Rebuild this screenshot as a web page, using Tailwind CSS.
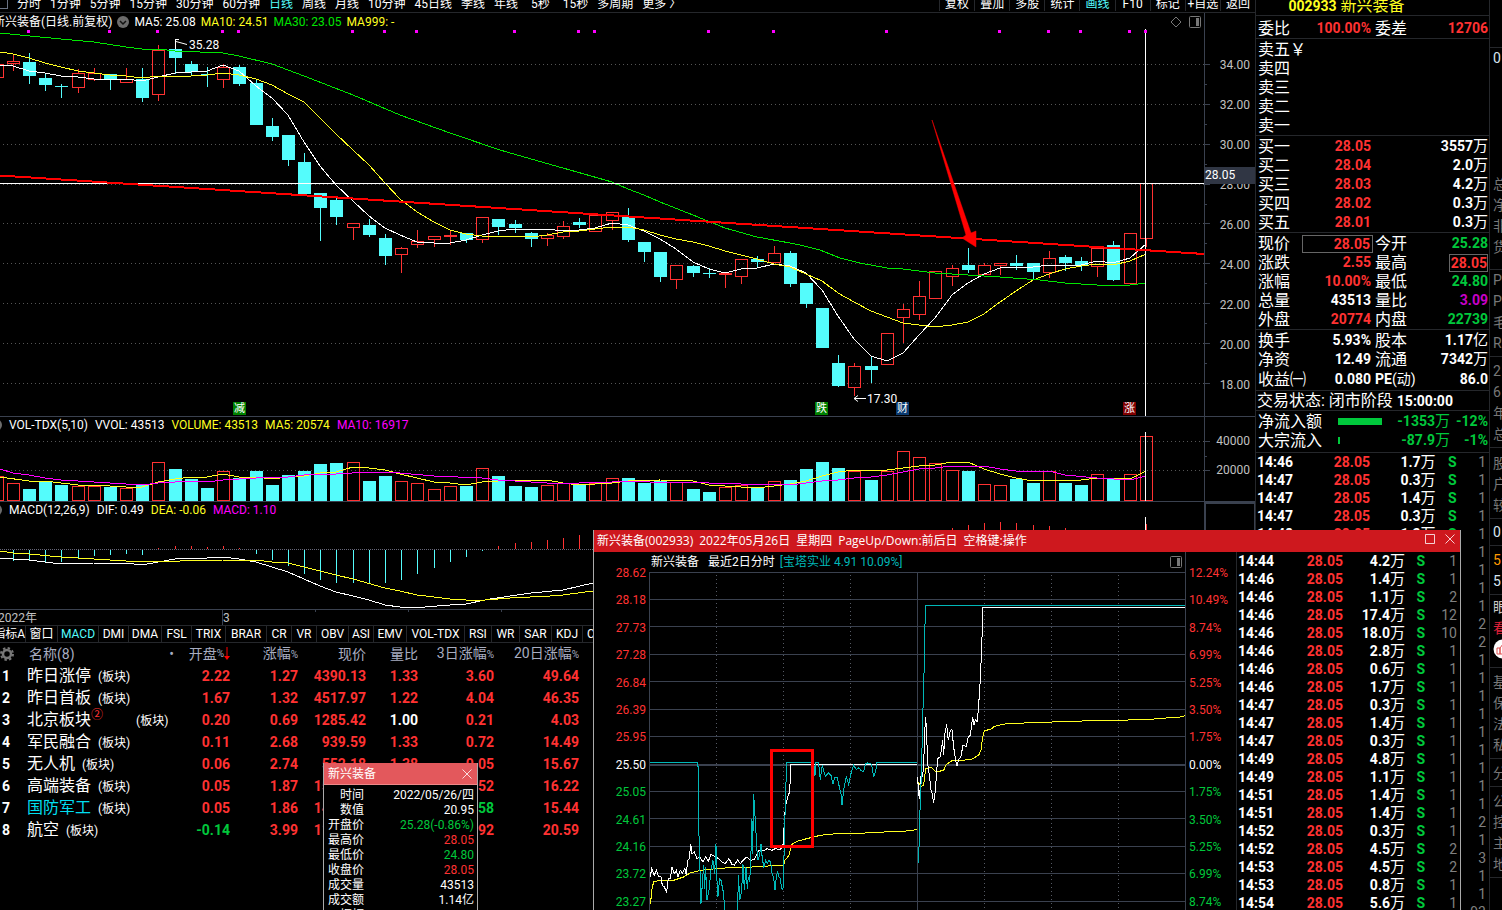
<!DOCTYPE html>
<html lang="zh-CN">
<head>
<meta charset="utf-8">
<title>新兴装备 002933</title>
<script src="https://cdn.jsdelivr.net/npm/@tailwindcss/browser@4"></script>
</head>
<body class="bg-black text-white text-xs font-['Roboto','Noto_Sans_CJK_SC',sans-serif] whitespace-nowrap">
<div class="relative flex h-screen overflow-hidden">

<!-- Charts and sector list -->
<main class="flex-1 min-w-0 overflow-hidden flex flex-col">
  <nav class="h-[13px] shrink-0 border-b border-[#25272b] overflow-hidden flex justify-between items-start">
    <div class="flex gap-[9px] -mt-[3px] leading-[14px]">
      <span class="w-2 h-3 border-r border-b border-gray-500"></span>
      <button>分时</button><button>1分钟</button><button>5分钟</button><button>15分钟</button><button>30分钟</button><button>60分钟</button><button class="text-[#54fcfc]">日线</button><button>周线</button><button>月线</button><button>10分钟</button><button>45日线</button><button>季线</button><button>年线</button><button class="pl-1">5秒</button><button class="pl-1">15秒</button><button>多周期</button><button>更多 〉</button>
    </div>
    <div class="grid grid-cols-9 w-[316px] -mt-[3px] leading-[14px] h-[14px]">
      <button class="border-l border-[#25272b]">复权</button><button class="border-l border-[#25272b]">叠加</button><button class="border-l border-[#25272b]">多股</button><button class="border-l border-[#25272b]">统计</button><button class="border-l border-[#25272b] text-[#54fcfc]">画线</button><button class="border-l border-[#25272b]">F10</button><button class="border-l border-[#25272b]">标记</button><button class="border-l border-[#25272b]">+自选</button><button class="border-l border-[#25272b]">返回</button>
    </div>
  </nav>

  <section class="relative h-[404px] shrink-0 border-b border-[#3a414f] flex">
    <div class="relative flex-1 min-w-0">
      <svg id="kline" class="absolute inset-0 w-full h-full" viewBox="0 13 1204 403" preserveAspectRatio="none"></svg>
      <div class="relative flex items-center justify-between h-[18px] leading-[18px]">
        <div class="flex items-center gap-[5px] -ml-[7px]">
          <span>新兴装备(日线.前复权)</span>
          <svg class="w-3 h-3" viewBox="0 0 12 12"><circle cx="6" cy="6" r="6" fill="#6c6c6c"/><path d="M3 5l3 3 3-3" fill="none" stroke="#111" stroke-width="1.5"/></svg>
          <span>MA5: 25.08</span><span class="text-[#ffff20]">MA10: 24.51</span><span class="text-[#00e600]">MA30: 23.05</span><span class="text-[#ffff20]">MA999: -</span>
        </div>
        <div class="flex items-center gap-[7px] pr-[3px]">
          <svg class="w-3 h-3" viewBox="0 0 12 12"><path d="M6 1l5 5-5 5-5-5z" fill="none" stroke="#777"/></svg>
          <svg class="w-3 h-3" viewBox="0 0 12 12"><rect x=".5" y=".5" width="11" height="11" rx="1" fill="none" stroke="#777"/><path d="M7 2h3v8H7z" fill="#777"/></svg>
        </div>
      </div>
      <span class="absolute left-[189px] top-[25px] leading-[14px]">35.28</span>
      <span class="absolute left-[867px] top-[379px] leading-[14px]">17.30</span>
      <span class="absolute left-[233px] top-[389px] w-[13px] h-[13px] leading-[13px] text-[11px] text-center bg-[#008000]">减</span>
      <span class="absolute left-[815px] top-[389px] w-[13px] h-[13px] leading-[13px] text-[11px] text-center bg-[#008000]">跌</span>
      <span class="absolute left-[896px] top-[389px] w-[13px] h-[13px] leading-[13px] text-[11px] text-center bg-[#0a3a70]">财</span>
      <span class="absolute left-[1123px] top-[389px] w-[13px] h-[13px] leading-[13px] text-[11px] text-center bg-[#800000]">涨</span>
    </div>
    <div class="relative w-[51px] border-l border-[#3a414f] text-[#c0c0c0] pt-[44px] pr-[5px] flex flex-col gap-6 items-end leading-4">
      <svg id="ticks" class="absolute left-0 top-0 w-2 h-[403px]" viewBox="0 13 8 403"></svg>
      <span>34.00</span><span>32.00</span><span>30.00</span><span>28.00</span><span>26.00</span><span>24.00</span><span>22.00</span><span>20.00</span><span>18.00</span>
      <span class="absolute left-0 top-[154px] w-[50px] h-[17px] bg-[#303644] text-white leading-[17px]">28.05</span>
    </div>
  </section>

  <section class="relative h-[85px] shrink-0 border-b border-[#3a414f] flex">
    <div class="relative flex-1 min-w-0">
      <svg id="volume" class="absolute inset-0 w-full h-full" viewBox="0 417 1204 84" preserveAspectRatio="none"></svg>
      <div class="relative flex items-center gap-[7px] leading-4">
        <svg class="w-3 h-3 -ml-[10px]" viewBox="0 0 12 12"><circle cx="6" cy="6" r="6" fill="#6c6c6c"/><path d="M3 5l3 3 3-3" fill="none" stroke="#111" stroke-width="1.5"/></svg>
        <span>VOL-TDX(5,10)</span><span>VVOL: 43513</span><span class="text-[#ffff20]">VOLUME: 43513</span><span class="text-[#ffff20]">MA5: 20574</span><span class="text-[#ff00ff]">MA10: 16917</span>
      </div>
    </div>
    <div class="relative w-[51px] border-l border-[#3a414f] text-[#c0c0c0] pt-4 pr-[5px] flex flex-col gap-[13px] items-end leading-4">
      <svg class="absolute left-0 top-0 w-2 h-[84px]" viewBox="0 417 8 84" stroke="#3a414f"><path d="M0 441.5h5M0 456.5h2M0 470.5h5"/></svg>
      <span>40000</span><span>20000</span>
    </div>
  </section>

  <section class="relative h-[108px] shrink-0 border-b border-[#3a414f] flex">
    <div class="relative flex-1 min-w-0">
      <svg id="macd" class="absolute inset-0 w-full h-full" viewBox="0 502 1204 107" preserveAspectRatio="none"></svg>
      <div class="relative flex items-center gap-[7px] leading-4">
        <svg class="w-3 h-3 -ml-[10px]" viewBox="0 0 12 12"><circle cx="6" cy="6" r="6" fill="#6c6c6c"/><path d="M3 5l3 3 3-3" fill="none" stroke="#111" stroke-width="1.5"/></svg>
        <span>MACD(12,26,9)</span><span>DIF: 0.49</span><span class="text-[#ffff20]">DEA: -0.06</span><span class="text-[#ff00ff]">MACD: 1.10</span>
      </div>
    </div>
    <div class="w-[51px] border-2 border-r border-[#3a414f]"></div>
  </section>

  <div class="relative h-[15px] shrink-0 text-[#c0c0c0] leading-[16px]">
    <svg class="absolute left-0 top-0 w-[593px] h-[15px]" viewBox="0 610 593 15" stroke="#3a414f"><path d="M222.5 610v15M315.5 610v2M408.5 610v2M501.5 610v2"/></svg>
    <div class="flex"><span class="w-[223px] -ml-0.5">2022年</span><span class="pl-0.5">3</span></div>
  </div>

  <div class="h-[18px] shrink-0 border-y border-[#25272b] w-[593px] overflow-hidden">
    <div id="tabs" class="grid grid-cols-[26px_32px_41px_30px_33px_30px_34px_41px_25px_25px_32px_25px_33px_58px_27px_28px_32px_31px_40px] leading-4"></div>
  </div>

  <table class="w-[579px] table-fixed text-right text-sm">
    <colgroup><col class="w-[26px]"><col class="w-[150px]"><col class="w-[54px]"><col class="w-[68px]"><col class="w-[68px]"><col class="w-[52px]"><col class="w-[76px]"><col class="w-[85px]"></colgroup>
    <thead><tr class="h-[22px] leading-5 text-[#a8adc0]">
      <th class="text-left"><svg class="w-[14px] h-[14px]" viewBox="0 0 14 14"><circle cx="7" cy="7" r="4" fill="none" stroke="#777" stroke-width="2.5"/><circle cx="7" cy="7" r="6" fill="none" stroke="#777" stroke-width="2" stroke-dasharray="2.4 2.3"/></svg></th>
      <th class="font-normal"><span class="flex justify-between pl-[3px] pr-[2px]"><span>名称(8)</span><span>•</span></span></th>
      <th class="font-normal"><span class="flex justify-end items-center">开盘<span class="text-[10px]">%</span><svg class="w-[6px] h-4" viewBox="0 0 6 16"><path d="M3 1v11" stroke="red"/><path d="M0 10h6l-3 4z" fill="red"/></svg></span></th>
      <th class="font-normal">涨幅<span class="text-[10px]">%</span></th><th class="font-normal">现价</th><th class="font-normal">量比</th><th class="font-normal">3日涨幅<span class="text-[10px]">%</span></th><th class="font-normal">20日涨幅<span class="text-[10px]">%</span></th>
    </tr></thead>
    <tbody id="sectors"></tbody>
  </table>
</main>

<!-- Quote panel -->
<aside class="w-[235px] shrink-0 border-x border-[#25272b] text-base overflow-hidden">
  <h1 class="h-[19px] border-b border-[#25272b] text-[#ffff20] leading-4 flex items-start justify-center -mt-[3px] mb-[3px] pr-[52px] gap-1 h-[19px]"><b class="text-sm leading-[18px]">002933</b><span class="leading-[18px]">新兴装备</span></h1>
  <div id="quote"></div>
  <table class="w-full table-fixed text-right text-sm font-bold">
    <colgroup><col class="w-[50px]"><col class="w-[63px]"><col class="w-[65px]"><col class="w-[23px]"><col class="w-[30px]"></colgroup>
    <tbody id="ticksA"></tbody>
  </table>
</aside>

<!-- Sliver of the company column -->
<aside id="company" class="w-[12px] shrink-0 overflow-hidden text-sm text-[#777]"></aside>

<!-- Intraday window -->
<section class="absolute left-[593px] top-[530px] bottom-0 w-[868px] bg-black border-x border-[#aaa] overflow-hidden">
  <header class="-mx-px h-[22px] bg-[#ce181e] flex items-center justify-between pl-1 pr-[6px] text-[12px] font-['Open_Sans','Noto_Sans_CJK_SC',sans-serif]">
    <span class="flex gap-[6px]"><span>新兴装备(002933)</span><span>2022年05月26日</span><span>星期四</span><span>PageUp/Down:前后日</span><span>空格键:操作</span></span>
    <span class="flex gap-[10px] pb-1">
      <button aria-label="最大化"><svg class="w-[10px] h-[10px] block" viewBox="0 0 10 10"><path d="M.5.5h9v9h-9z" fill="none" stroke="#fff" opacity=".8"/></svg></button>
      <button aria-label="关闭"><svg class="w-[10px] h-[10px] block" viewBox="0 0 10 10"><path d="M.5.5l9 9M9.500.5l-9 9" fill="none" stroke="#fff" opacity=".8"/></svg></button>
    </span>
  </header>
  <div class="flex">
    <div class="w-[55px] shrink-0 pt-[13px]"><div class="h-[345px] flex flex-col justify-between items-end leading-4 pr-[3px] text-[#ff3232]">
      <span>28.62</span><span>28.18</span><span>27.73</span><span>27.28</span><span>26.84</span><span>26.39</span><span>25.95</span><span class="text-white">25.50</span><span class="text-[#00c83c]">25.05</span><span class="text-[#00c83c]">24.61</span><span class="text-[#00c83c]">24.16</span><span class="text-[#00c83c]">23.72</span><span class="text-[#00c83c]">23.27</span>
    </div></div>
    <div class="relative w-[537px] h-[358px] shrink-0">
      <svg id="intraday" class="absolute inset-0 w-full h-full" viewBox="649 552 537 358"></svg>
      <div class="relative flex items-center justify-between h-5 px-0.5 pr-[4px]">
        <div class="flex gap-[5px]"><span class="mr-1">新兴装备</span><span>最近2日分时</span><span class="text-[#00b8b8]">[宝塔实业 4.91 10.09%]</span></div>
        <svg class="w-3 h-3" viewBox="0 0 12 12"><rect x=".5" y=".5" width="11" height="11" rx="1" fill="none" stroke="#777"/><path d="M7 2h3v8H7z" fill="#777"/></svg>
      </div>
    </div>
    <div class="w-[51px] shrink-0 pt-[13px] border-r border-[#25272b]"><div class="h-[345px] flex flex-col justify-between leading-4 pl-[3px] text-[#ff3232]">
      <span>12.24%</span><span>10.49%</span><span>8.74%</span><span>6.99%</span><span>5.25%</span><span>3.50%</span><span>1.75%</span><span class="text-white">0.00%</span><span class="text-[#00c83c]">1.75%</span><span class="text-[#00c83c]">3.50%</span><span class="text-[#00c83c]">5.25%</span><span class="text-[#00c83c]">6.99%</span><span class="text-[#00c83c]">8.74%</span>
    </div></div>
    <div class="flex-1 min-w-0">
      <table class="w-full table-fixed text-right text-sm font-bold">
        <colgroup><col class="w-[48px]"><col class="w-[58px]"><col class="w-[62px]"><col class="w-[22px]"><col></colgroup>
        <tbody id="ticksB"></tbody>
      </table>
    </div>
  </div>
</section>

<!-- Cursor data window -->
<section class="absolute left-[323px] top-[763px] bottom-0 w-[155px] bg-black border-x border-[#aaa] overflow-hidden">
  <header class="-mx-px h-[22px] bg-[#e3585c] flex items-center justify-between pl-[5px] pr-[6px] border-b border-[#e88]">
    <span>新兴装备</span>
    <button aria-label="关闭"><svg class="w-[10px] h-[10px] block" viewBox="0 0 10 10"><path d="M.5.5l9 9M9.500.5l-9 9" fill="none" stroke="#fff" opacity=".8"/></svg></button>
  </header>
  <dl id="cursor" class="grid grid-cols-[36px_1fr] pl-1 pr-[3px] pt-[3px] text-right leading-[15px]"></dl>
</section>
</div>

<script>
const RED = '#ff3232', CY = '#54fcfc', YE = '#ffff20', MG = '#ff00ff', GR = '#3a414f';
// centre x, wick top, wick bottom, body top, body bottom, rising?, volume bar top
const K = [
[-2.5,64,78,64,78,1,476],[13.5,55,71,61,64,1,483],[29.5,53,84,62,76,0,489],[45.5,74,91,78,85,0,481],[61.5,84,98,86,87,0,485],
[78.5,69,93,73,88,1,486],[94.5,68,81,73,80,1,486],[110.5,74,90,74,80,0,487],[126.5,68,83,79,83,1,488],[142.5,68,102,79,98,0,485],
[158.5,45,101,50,95,1,462],[175.5,40,74,49,58,0,469],[191.5,61,75,64,72,0,479],[207.5,67,87,74,75,0,488],[223.5,64,88,67,80,1,471],
[239.5,65,86,67,84,0,478],[256.5,80,125,83,125,0,471],[272.5,118,141,126,137,0,485],[288.5,135,166,135,160,0,475],[304.5,153,194,162,194,0,471],
[320.5,193,241,193,208,0,464],[336.5,196,225,200,217,0,463],[353.5,223,240,223,228,1,462],[369.5,219,237,225,235,0,481],[385.5,234,265,238,256,0,476],
[401.5,247,273,248,255,1,481],[417.5,230,248,241,245,1,483],[434.5,236,247,236,240,1,489],[450.5,230,245,235,237,1,486],[466.5,233,243,233,240,0,486],
[482.5,217,243,217,240,1,468],[498.5,219,235,219,227,0,476],[515.5,220,233,224,228,0,486],[531.5,232,247,233,239,0,487],[547.5,233,246,235,239,1,485],
[563.5,221,239,226,237,1,483],[579.5,218,228,222,225,0,484],[595.5,215,232,215,232,1,483],[612.5,212,230,212,221,1,478],[628.5,208,242,217,240,0,478],
[644.5,242,262,242,252,0,483],[660.5,252,282,252,277,0,481],[676.5,265,289,265,280,1,482],[693.5,265,277,266,273,0,489],[709.5,268,278,273,274,0,492],
[725.5,273,288,273,275,1,487],[741.5,259,284,259,277,1,485],[757.5,256,267,259,262,0,488],[774.5,246,263,253,263,1,481],[790.5,251,287,253,284,0,480],
[806.5,283,308,283,304,0,469],[822.5,308,348,308,348,0,462],[838.5,355,387,363,386,0,468],[854.5,363,396,366,388,1,471],[871.5,357,383,366,370,0,480],
[887.5,333,365,333,365,1,471],[903.5,304,343,309,318,1,451],[919.5,281,320,296,315,1,457],[935.5,271,299,271,299,1,463],[952.5,265,286,268,277,1,470],
[968.5,248,273,265,270,0,471],[984.5,263,275,265,275,1,484],[1000.5,263,275,263,266,1,485],[1016.5,255,270,263,266,0,479],[1033.5,263,279,263,272,0,483],
[1049.5,251,278,258,273,1,471],[1065.5,255,271,257,263,0,483],[1081.5,257,271,261,265,0,485],[1097.5,248,277,248,267,1,474],[1113.5,241,281,245,280,0,479],
[1130.5,233,284,233,284,1,474],[1146.5,183,247,183,239,1,436]];
const pl = (pts, c) => `<polyline points="${pts}" fill="none" stroke="${c}" vector-effect="non-scaling-stroke" shape-rendering="crispEdges"/>`;
const ln = (x1, y1, x2, y2, c, extra = '') => `<line x1="${x1}" y1="${y1}" x2="${x2}" y2="${y2}" stroke="${c}" ${extra} shape-rendering="crispEdges"/>`;
const box = (x, t, b, up) => up
  ? `<rect x="${x - 6}" y="${t + .5}" width="12" height="${Math.max(b - t - 1, 1)}" fill="none" stroke="${RED}" shape-rendering="crispEdges"/>`
  : `<rect x="${x - 6.5}" y="${t}" width="13" height="${b - t}" fill="${CY}" shape-rendering="crispEdges"/>`;
const dots = 'stroke-dasharray="1 3" stroke-dashoffset="0"';

let s = '';
for (const y of [64.5,104.5,144.5,184.5,223.5,263.5,303.5,343.5,383.5]) s += ln(3, y, 1204, y, '#555', dots);
for (const [x, h, l, t, b, up] of K) {
  const c = up ? RED : CY;
  if (h < t) s += ln(x, h, x, t, c);
  if (l > b) s += ln(x, b, x, l, c);
  s += box(x, t, b, up);
}
s += pl('0,65 13,66 29,71 45,73 61,76 78,77 94,79 110,80 126,79 142,81 158,77 175,73 191,72 207,71 223,65 239,71 256,86 272,98 288,115 304,142 320,166 336,185 353,201 369,216 385,228 400,235 417,242 434,243 450,243 466,240 482,235 498,231 515,229 531,230 547,229 563,231 579,230 595,228 612,223 628,225 644,231 660,239 676,249 693,262 709,269 725,273 741,269 757,268 774,264 790,266 806,273 822,290 838,316 854,339 871,356 887,361 903,353 919,335 935,318 952,295 968,283 984,274 1000,268 1016,267 1033,267 1049,265 1065,265 1081,265 1097,261 1113,263 1130,258 1146,244', '#fff');
s += pl('0,52 13,54 29,58 45,63 61,67 78,71 94,73 110,75 126,76 142,78 158,76 175,76 191,76 207,75 223,73 239,75 256,79 272,85 288,94 304,102 320,118 336,134 353,150 369,165 385,183 400,199 417,212 434,222 450,230 466,234 482,236 515,236 531,237 547,235 563,232 579,231 595,229 612,227 628,227 644,230 660,235 676,239 693,242 709,246 725,251 741,255 757,259 774,264 790,267 806,274 822,281 838,293 854,302 871,311 887,317 903,323 919,325 935,327 952,325 968,322 984,314 1000,302 1016,291 1033,280 1049,274 1065,269 1081,266 1097,264 1113,265 1130,261 1146,254', YE);
s += pl('0,33 30,36 61,39 94,42 126,47 142,49 158,49 175,51 200,52 223,53 239,56 272,64 304,76 353,95 400,115 450,133 500,150 531,159 563,168 612,182 628,189 644,195 660,202 693,215 725,228 757,237 790,243 800,245 820,250 840,258 860,263 887,268 903,269 935,273 968,275 1000,277 1040,280 1065,283 1097,285 1113,286 1130,285 1146,283', '#00e600');
s += ln(0, 183.5, 1204, 183.5, '#fff') + ln(1145.5, 29, 1145.5, 416, '#fff');
s += ln(0, 175.5, 1204, 254, '#f00', 'stroke-width="2"');
s += '<defs><linearGradient id="fade" x1="0" y1="0" x2="0" y2="1"><stop offset="0" stop-color="#800"/><stop offset=".12" stop-color="#f00"/></linearGradient></defs><path d="M932 120L971 233l5-2v16l-14-9 4-3z" fill="url(#fade)" stroke="#f00" stroke-width=".5"/>';
for (const x of [28,109,157,222,238,352,384,416,514,578,594,708,773,886,999,1048,1080,1129,1145]) s += `<rect x="${x - 1}" y="30" width="3" height="3" fill="${MG}"/>`;
s += '<path d="M175.5 49V39M175 39.5h4M176 41.500l11 3M854 398.500h12M854 398.500l4-3M854 398.500l4 3" fill="none" stroke="#fff"/>';
document.getElementById('kline').innerHTML = s;

s = '';
[64.5,104.5,144.5,184.5,223.5,263.5,303.5,343.5,383.5].forEach((y, i) => { s += ln(0, y, 5, y, GR); if (i < 8) s += ln(0, y + 20, 2, y + 20, GR); });
document.getElementById('ticks').innerHTML = s;

s = ln(3, 441.5, 1204, 441.5, '#555', dots) + ln(3, 470.5, 1204, 470.5, '#555', dots);
for (const k of K) s += box(k[0], k[6], 501, k[5]);
s += pl('0,477 29,481 45,481 61,483 78,485 94,485 126,487 142,487 158,482 175,479 191,477 207,477 223,474 239,477 256,477 272,479 288,477 304,476 320,473 336,472 353,467 369,468 385,470 400,474 417,478 434,482 450,483 466,485 482,482 498,481 515,480 531,481 547,480 563,483 579,485 595,484 612,483 628,481 660,480 693,481 709,485 725,486 741,487 757,488 774,486 790,484 806,481 822,476 838,472 854,470 887,470 903,468 919,466 935,465 952,462 968,462 984,469 1000,474 1016,478 1033,481 1049,480 1081,480 1097,478 1113,478 1130,479 1146,471', YE);
s += pl('0,469 13,473 29,475 45,478 61,480 94,482 126,484 142,485 158,483 175,482 191,481 207,482 223,480 256,478 288,477 304,475 336,474 369,472 400,473 434,476 482,478 498,480 515,481 547,483 579,483 595,482 612,482 640,481 660,483 676,482 693,482 709,483 741,484 774,484 790,485 806,483 822,481 838,480 854,478 871,477 887,475 903,472 919,469 935,468 952,466 984,466 1000,469 1016,471 1049,471 1065,475 1097,478 1130,480 1146,476', MG);
s += ln(1145.5, 432, 1145.5, 501, '#fff');
document.getElementById('volume').innerHTML = s;

s = ln(0, 549.5, 1204, 549.5, '#667', 'stroke-dasharray="1 1"');
[561,560,563,562,558,556,555,554,555,548,546,546,547,546,548,554,560,566,574,580,583,583,583,583,580,574,568,562,557,551,546,543,542,540,538,535].forEach((y, i) => {
  const x = K[i + 1][0]; s += y < 550 ? ln(x, y, x, 549, RED) : ln(x, 550, x, y, CY);
});
[528,525,523,522,523,525,526,528].forEach((y, i) => { const x = K[i + 59][0]; s += ln(x, y, x, 549, RED); });
s += ln(1146.5, 524, 1146.5, 549, RED) + ln(1145.5, 517, 1145.5, 609, '#fff');
s += pl('0,558 13,559 29,560 45,562 61,564 94,563 126,563 142,565 158,562 175,559 207,558 223,557 239,559 256,562 272,567 288,572 304,579 320,586 336,592 353,596 369,600 385,605 400,607 425,607 450,605 466,604 490,599 531,593 563,590 593,583', '#fff');
s += pl('0,551 13,553 29,554 61,557 94,559 126,561 180,561 223,560 256,560 272,562 288,563 304,567 320,571 336,575 353,579 385,588 400,591 417,595 434,597 450,599 466,600 485,600 510,598 550,596 563,595 593,591', YE);
document.getElementById('macd').innerHTML = s;

s = '';
for (const y of [572.5,599.5,626.5,654.5,681.5,709.5,736.5,791.5,818.5,846.5,873.5,901.5]) s += ln(649, y, 1186, y, GR);
s += ln(649, 765, 1186, 765, GR, 'stroke-width="2"');
for (const x of [716.5,783.5,850.5,984.5,1051.5,1118.5]) s += ln(x, 575, x, 910, '#555a64', 'stroke-dasharray="1 3"');
s += ln(649.5, 572, 649.5, 910, GR) + ln(917.5, 572, 917.5, 910, GR) + ln(1185.5, 552, 1185.5, 910, GR);
const day1 = 'translate(590.300 530.300) scale(.33333)', day2 = 'translate(910.300 530.300) scale(.33333)';
s += `<g transform="${day1}">` +
 pl('181,1120 184,1080 190,1055 200,1052 250,1050 280,1040 300,1028 330,1020 380,1015 420,1012 490,1010 550,1006 580,1006 584,990 596,975 605,942 620,933 650,925 690,915 730,911 830,908 900,904 950,902 981,898', YE) +
 pl('180,1040 184,1015 192,1035 198,1020 205,1040 212,1040 216,1065 222,1070 229,1085 234,1045 240,1045 245,1010 252,1030 258,1020 263,1040 270,1020 276,1028 284,1015 288,1035 292,990 297,985 301,940 305,970 312,965 320,985 328,980 338,995 346,980 354,993 362,972 372,978 385,985 395,995 405,1000 416,985 425,1002 432,1005 442,988 450,1000 460,988 470,980 480,990 492,988 505,960 520,962 530,955 545,960 555,955 570,958 578,945 582,880 585,830 592,800 598,785 602,703 981,703', '#fff') +
 pl('180,697 323,697 326,910 332,1120 340,1005 343,1075 346,1010 350,1110 356,1080 362,1020 368,990 373,1030 377,940 380,1050 383,1100 388,1045 392,1050 396,1070 399,1085 402,1120 404,1150 442,1150 444,1035 449,1108 454,1080 458,1000 462,1078 467,1010 471,1075 474,1040 478,1055 481,1000 485,865 487,970 490,790 495,870 500,960 503,990 508,975 512,940 516,985 521,1012 526,990 531,1000 536,990 541,995 546,1035 550,1040 554,1080 558,1040 562,1022 566,1040 570,1045 574,1075 578,1078 581,985 586,780 590,697 670,697 674,737 676,697 685,697 690,748 696,705 705,738 715,728 722,735 728,760 734,740 741,742 746,765 752,790 755,825 760,780 768,740 775,762 782,730 790,705 798,718 806,712 812,720 820,725 826,700 832,698 838,700 844,702 850,740 856,722 860,697 981,697', '#00b8b8') +
 `</g><g transform="${day2}">` +
 pl('24,755 32,768 40,765 46,715 64,712 78,725 100,720 108,703 125,691 160,690 185,686 205,675 212,660 217,620 222,602 245,595 252,588 290,580 430,575 520,572 630,570 735,566 780,562 805,561 825,556', YE) +
 pl('22,740 25,790 28,805 31,740 36,740 40,710 43,610 46,560 49,610 52,700 58,740 62,780 66,790 70,818 74,790 78,740 82,685 90,680 97,630 100,675 104,610 109,582 114,630 120,600 125,597 130,650 136,690 140,708 144,690 152,678 158,645 168,648 174,620 180,615 187,560 191,585 195,568 200,575 204,540 207,495 211,430 215,325 218,232 825,232', '#fff') +
 pl('25,998 28,870 33,740 38,540 41,440 43,305 47,226 825,226', '#00b8b8') + '</g>';
s += '<rect x="771.5" y="750.5" width="41" height="96" fill="none" stroke="#f00" stroke-width="3"/>';
document.getElementById('intraday').innerHTML = s;

document.getElementById('tabs').innerHTML = ['指标A','窗口','MACD','DMI','DMA','FSL','TRIX','BRAR','CR','VR','OBV','ASI','EMV','VOL-TDX','RSI','WR','SAR','KDJ','CCI']
  .map((t, i) => `<button class="${i === 2 ? 'flex justify-center border-r border-[#25272b] text-[#54fcfc]' : i === 0 ? 'flex justify-end border-r border-[#25272b]' : i === 18 ? 'flex pl-1' : 'flex justify-center border-r border-[#25272b]'}">${t}</button>`).join('');

// Value colours: r red, g green, w white, m magenta, y gray
const col = { r: 'text-[#ff3232]', g: 'text-[#00c83c]', w: 'text-white', m: 'text-[#c800c8]', y: 'text-[#808080]' };
const num = v => v.replace(/[万亿]/, m => `<span class="font-normal text-[15px]">${m}</span>`);

document.getElementById('sectors').innerHTML = [
['昨日涨停','r2.22','r1.27','r4390.13','r1.33','r3.60','r49.64'],
['昨日首板','r1.67','r1.32','r4517.97','r1.22','r4.04','r46.35'],
['北京板块','r0.20','r0.69','r1285.42','w1.00','r0.21','r4.03'],
['军民融合','r0.11','r2.68','r939.59','r1.33','r0.72','r14.49'],
['无人机','r0.06','r2.74','r552.18','r1.38','r0.05','r15.67'],
['高端装备','r0.05','r1.87','r1503.20','r1.05','r2.52','r16.22'],
['国防军工','r0.05','r1.86','r1420.36','r1.12','g-0.58','r15.44'],
['航空','g-0.14','r3.99','r1186.05','r1.21','r1.92','r20.59']].map((r, i) =>
`<tr class="h-[22px] leading-[22px] font-bold"><td class="text-left pl-0.5">${i + 1}</td><td class="font-normal"><div class="flex items-center h-[22px] gap-[7px] pl-px"><span class="${i === 6 ? 'text-base leading-[22px] text-[#00dff0]' : 'text-base leading-[22px]'}">${r[0]}</span>${i === 2 ? '<span class="text-xs text-[#ff3232] self-start leading-3 -ml-[7px] mr-[26px]">②</span>' : ''}<span class="text-xs pt-0.5">(板块)</span></div></td>${r.slice(1).map(v => `<td class="${col[v[0]]}">${v.slice(1)}</td>`).join('')}</tr>`).join('');

const row = (l1, v1, l2, v2, b = 0) => `<div class="grid grid-cols-[48px_67px_48px_1fr] items-center h-[19px] leading-[19px] pl-0.5 pr-px"><span>${l1}</span><b class="${v1 ? col[v1[0]] + ' text-sm text-right pr-0.5' + (b === 1 ? ' border border-[#666] -ml-1 h-[18px] leading-4' : ' leading-[19px]') : ''}">${v1 ? num(v1.slice(1)) : ''}</b><span class="pl-0.5">${l2}</span><b class="${v2 ? col[v2[0]] + ' text-sm text-right' + (b === 2 ? ' border border-[#666] ml-auto w-[39px] h-[18px] leading-4' : ' leading-[19px]') : ''}">${v2 ? num(v2.slice(1)) : ''}</b></div>`;
const group = html => `<div class="border-b border-[#25272b] pt-px">${html}</div>`;
document.getElementById('quote').innerHTML =
 '<div class="border-b border-[#25272b]">' + row('委比','r100.00%','委差','r12706') + '</div>' +
 group(['卖五￥','卖四','卖三','卖二','卖一'].map(l => row(l,'','','')).join('')) +
 group([['一','28.05','3557万'],['二','28.04','2.0万'],['三','28.03','4.2万'],['四','28.02','0.3万'],['五','28.01','0.3万']].map(r => row('买' + r[0],'r' + r[1],'','w' + r[2])).join('')) +
 group(row('现价','r28.05','今开','g25.28',1) + row('涨跌','r2.55','最高','r28.05',2) + row('涨幅','r10.00%','最低','g24.80') + row('总量','w43513','量比','m3.09') + row('外盘','r20774','内盘','g22739')) +
 `<div class="pb-[2px] border-b border-[#25272b] pt-px">` + row('换手','w5.93%','股本','w1.17亿') + row('净资','w12.49','流通','w7342万') + row('收益㈠','w0.080','<b class="text-sm">PE</b><span class="text-sm">(动)</span>','w86.0') + '</div>' +
 `<div class="h-5 leading-[19px] border-b border-[#25272b] pl-px">交易状态: 闭市阶段 <b class="text-sm">15:00:00</b></div>` +
 `<div class="h-[42px] leading-[19px] border-b border-[#25272b] pt-px text-[#00c83c]">` +
 [['净流入额','w-[44px] h-[7px] bg-[#00c83c]','-1353万','-12%'],['大宗流入','w-0.5 h-[7px] bg-[#00c83c]','-87.9万','-1%']].map(r => `<div class="grid grid-cols-[80px_46px_66px_1fr] items-center h-[19px] pl-0.5 pr-px"><span class="text-white">${r[0]}</span><i class="${r[1]}"></i><span class="text-sm leading-[19px] font-bold text-right">${num(r[2])}</span><b class="text-sm leading-[19px] text-right">${r[3]}</b></div>`).join('') + '</div>';

const tick = (t, v, n) => `<tr class="h-[18px] leading-[17px]"><td class="text-left pl-px">${t}</td><td class="text-[#ff3232]">28.05</td><td>${num(v + '万')}</td><td class="text-[#00c83c] pr-0.5">S</td><td class="text-[#808080] pr-[3px] font-normal">${n}</td></tr>`;
const B = [['14:44','4.2',1],['14:46','1.4',1],['14:46','1.1',2],['14:46','17.4',12],['14:46','18.0',10],['14:46','2.8',1],['14:46','0.6',1],['14:46','1.7',1],['14:47','0.3',1],['14:47','1.4',1],['14:47','0.3',1],['14:49','4.8',1],['14:49','1.1',1],['14:51','1.4',1],['14:51','1.4',1],['14:52','0.3',1],['14:52','4.5',2],['14:53','4.5',2],['14:53','0.8',1],['14:54','5.6',1]];
document.getElementById('ticksB').innerHTML = B.map(r => tick(...r)).join('');
const A = [['14:46','1.7',1],['14:47','0.3',1],['14:47','1.4',1],['14:47','0.3',1],['14:48','1.3',1]];
[1,1,1,1,2,2,1,1,1,1,1,1,1,1,1,2,1,3,1,1,93].forEach((n, i) => A.push(['14:' + (49 + (i >> 2)), '1.1', n]));
document.getElementById('ticksA').innerHTML = A.map(r => tick(...r)).join('');

// Blocks: height, leading space, lines, colour class
document.getElementById('company').innerHTML = [
[48,0,[],''],[222,0,['0'],'text-[#d8e4f0] pt-px'],[87,0,['P','P','毛','R'],''],[91,4,['2','6','年','总'],''],[71,5,['股','户','较'],''],[27,3,['0'],'text-[#d8e4f0]'],
[49,4,['<span class="text-[#ff9a00]">5</span>','5'],'text-[#d8e4f0]'],[73,2,['眼','<span class="text-[#e0203a]">看</span>','<svg class="w-5 h-5" viewBox="0 0 20 20"><circle cx="10" cy="10" r="9.500" fill="#fff"/><path d="M4 9h3v6H4zM7 9l3-4 1 1v3h4l-1 6H7z" fill="none" stroke="#e05050"/></svg>'],'text-[#c8c8c8]'],
[91,4,['基','保','法','私'],''],[28,4,['分'],''],[91,4,['公','控','主','地'],'']
].map(([h, p, l, c]) => `<div class="border-b border-[#25272b] pl-[3px] leading-[21px] ${c}" style="height:${h}px;padding-top:${p}px">${l.map(t => `<div>${t}</div>`).join('')}${h === 222 ? '<div class="pt-[105px] text-[#777]">总<br>净<br>非<br>货</div>' : ''}</div>`).join('');

document.getElementById('cursor').innerHTML = [['时间','w2022/05/26/四'],['数值','w20.95'],['开盘价','g25.28(-0.86%)'],['最高价','r28.05'],['最低价','g24.80'],['收盘价','r28.05'],['成交量','w43513'],['成交额','w1.14亿'],['振幅','w12.75%']]
 .map(([k, v]) => `<dt>${k}</dt><dd class="${col[v[0]]}">${v.slice(1)}</dd>`).join('');
</script>
</body>
</html>
